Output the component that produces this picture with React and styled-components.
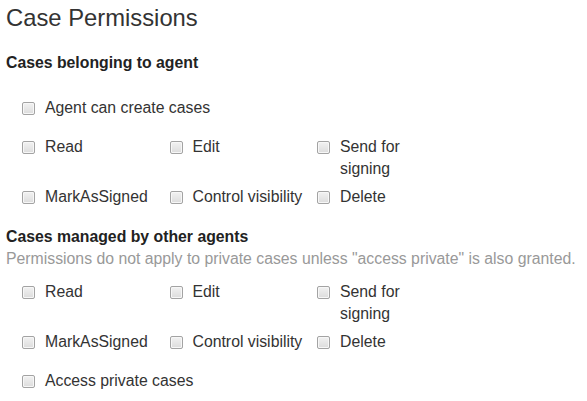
import React from "react";
import styled, { createGlobalStyle } from "styled-components";

const GlobalStyle = createGlobalStyle`
  html, body {
    margin: 0;
    padding: 0;
    background: #ffffff;
  }
  body {
    font-family: "Liberation Sans", Arial, sans-serif;
    color: #333333;
  }
`;

const Page = styled.div`
  padding: 5px 6px 0 6px;
  width: 587px;
  box-sizing: border-box;
`;

const Title = styled.h3`
  margin: 0;
  font-size: 23.8px;
  line-height: 26px;
  font-weight: normal;
  color: #333333;
`;

const SectionHeading = styled.h4`
  margin: ${(p) => p.$top}px 0 0 0;
  font-size: 15.8px;
  line-height: 22px;
  font-weight: bold;
  color: #222222;
`;

const Note = styled.p`
  margin: 0;
  font-size: 15.8px;
  line-height: 22px;
  color: #999999;
  white-space: nowrap;
`;

const OptionGrid = styled.div`
  display: grid;
  grid-template-columns: repeat(3, 147.5px);
  margin: ${(p) => p.$top}px 0 0 16px;
`;

const Option = styled.label`
  display: flex;
  align-items: flex-start;
  gap: 10px;
  padding-right: 13px;
  margin-bottom: 6px;
  font-size: 15.8px;
  line-height: 22px;
  color: #333333;
  cursor: pointer;
  grid-column: ${(p) => (p.$wide ? "1 / span 3" : "auto")};
`;

const Checkbox = styled.input.attrs({ type: "checkbox" })`
  appearance: none;
  -webkit-appearance: none;
  flex: none;
  width: 13px;
  height: 13px;
  margin: 5px 0 0 0;
  border: 1px solid #a3a3a3;
  border-radius: 2px;
  box-sizing: border-box;
  background: linear-gradient(#f2f2f2, #dcdcdc);
  box-shadow: inset 0 0 0 1px #f7f7f7;
`;

const OptionText = styled.span`
  flex: 1;
  min-width: 0;
`;

const options = [
  "Read",
  "Edit",
  "Send for signing",
  "MarkAsSigned",
  "Control visibility",
  "Delete",
];

function PermissionGrid({ top }) {
  return (
    <OptionGrid $top={top}>
      {options.map((o) => (
        <Option key={o}>
          <Checkbox />
          <OptionText>{o}</OptionText>
        </Option>
      ))}
    </OptionGrid>
  );
}

function SingleOption({ top, children }) {
  return (
    <OptionGrid $top={top}>
      <Option $wide>
        <Checkbox />
        <OptionText>{children}</OptionText>
      </Option>
    </OptionGrid>
  );
}

export default function App() {
  return (
    <>
      <GlobalStyle />
      <Page>
        <Title>Case Permissions</Title>
        <SectionHeading $top={21}>Cases belonging to agent</SectionHeading>
        <SingleOption top={23}>Agent can create cases</SingleOption>
        <PermissionGrid top={11} />
        <SectionHeading $top={12}>Cases managed by other agents</SectionHeading>
        <Note>
          Permissions do not apply to private cases unless "access private" is
          also granted.
        </Note>
        <PermissionGrid top={11} />
        <SingleOption top={11}>Access private cases</SingleOption>
      </Page>
    </>
  );
}
